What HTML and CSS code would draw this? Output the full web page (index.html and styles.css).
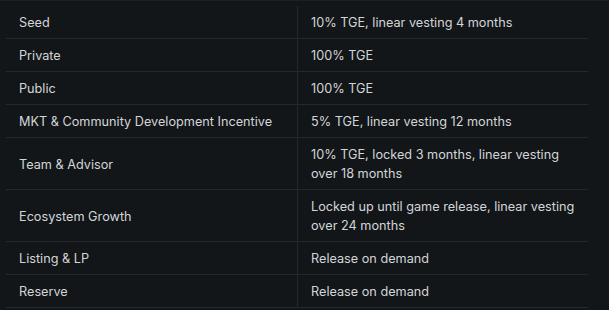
FILE: index.html
```html
<!DOCTYPE html>
<html>
<head>
<meta charset="utf-8">
<link rel="stylesheet" href="styles.css">
</head>
<body>
<div class="wrap">
  <table class="vest">
    <tbody>
      <tr><td class="k">Seed</td><td class="v">10% TGE, linear vesting 4 months</td></tr>
      <tr><td class="k">Private</td><td class="v">100% TGE</td></tr>
      <tr><td class="k">Public</td><td class="v">100% TGE</td></tr>
      <tr><td class="k">MKT &amp; Community Development Incentive</td><td class="v">5% TGE, linear vesting 12 months</td></tr>
      <tr><td class="k">Team &amp; Advisor</td><td class="v">10% TGE, locked 3 months, linear vesting over 18 months</td></tr>
      <tr><td class="k">Ecosystem Growth</td><td class="v">Locked up until game release, linear vesting over 24 months</td></tr>
      <tr><td class="k">Listing &amp; LP</td><td class="v">Release on demand</td></tr>
      <tr><td class="k">Reserve</td><td class="v">Release on demand</td></tr>
    </tbody>
  </table>
</div>
</body>
</html>
```
FILE: styles.css
```css
html, body {
  margin: 0;
  padding: 0;
  background: #131619;
}
body {
  border-top: 1px solid #1c1f23;
}
.wrap {
  padding: 5px 0 0 6px;
}
.vest {
  width: 582px;
  border-collapse: collapse;
  font-family: Inter, "Noto Sans", sans-serif;
  font-size: 12.7px;
  line-height: 19px;
  color: #d2d5d8;
}
.vest td {
  padding: 7px 13px 6px 13px;
  border-bottom: 1px solid #25292e;
  vertical-align: middle;
}
.vest td.k {
  width: 265px;
  border-right: 1px solid #25292e;
}
.vest td.v {
  padding-right: 10px;
}
```
